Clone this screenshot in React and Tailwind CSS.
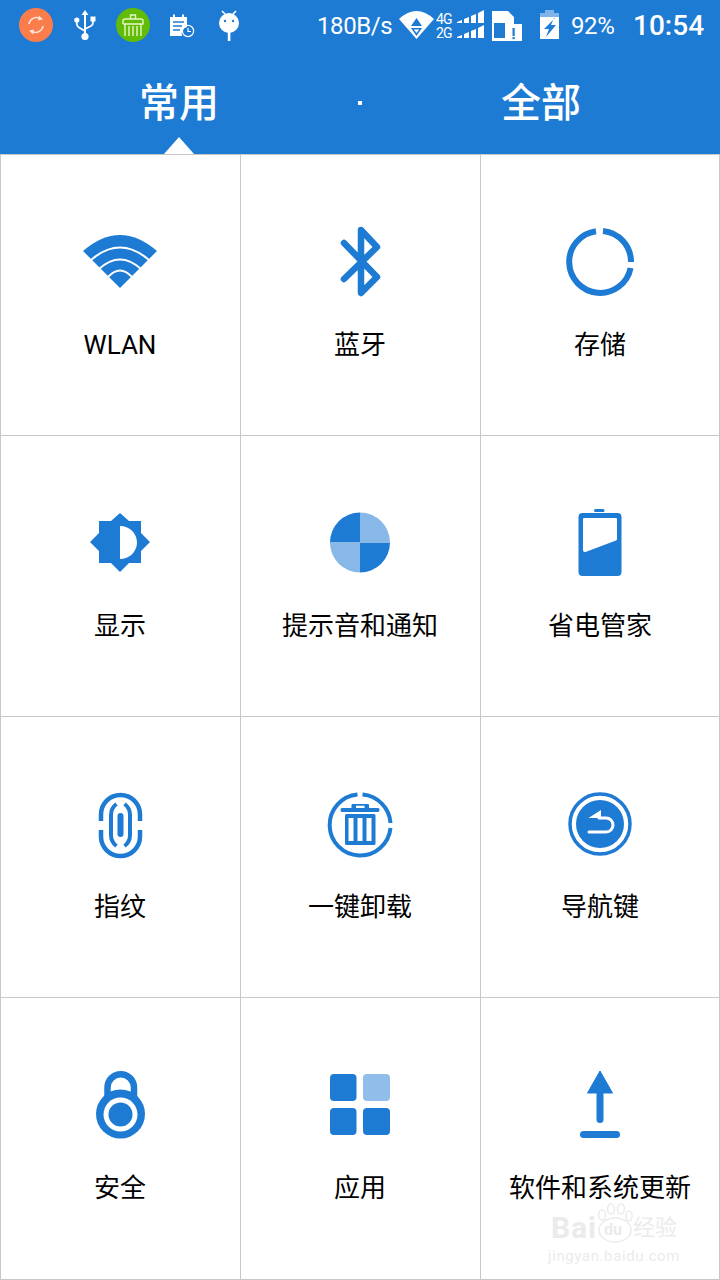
import React from 'react';

const BLUE = '#1e7bd4';
const LIGHT = '#87b8e8';

const Ico = ({ children }) => (
    <svg width="80" height="80" viewBox="0 0 80 80" fill={BLUE} className="block">
        {children}
    </svg>
);

const WifiIcon = () => (
    <Ico>
        <path d="M3 29 Q40 -3 77 29 L40 66 Z" />
        <g fill="none" stroke="#fff" strokeWidth="2">
            <path d="M11 38 Q40 13 69 38" />
            <path d="M19 47 Q40 28 61 47" />
            <path d="M28 55 Q40 42 52 55" />
        </g>
    </Ico>
);

const BluetoothIcon = () => (
    <Ico>
        <path d="M24 21 L57 55 L41 71 V8 L57 25 L24 57" fill="none" stroke={BLUE} strokeWidth="6.5" strokeLinecap="round" strokeLinejoin="round" />
    </Ico>
);

const StorageIcon = () => (
    <Ico>
        <g fill="none" stroke={BLUE} strokeWidth="6">
            <path d="M43 9 A31 31 0 0 1 71 40" />
            <path d="M70.6 46 A31 31 0 1 1 36 9.2" />
        </g>
    </Ico>
);

const BrightnessIcon = () => (
    <Ico>
        <polygon points="40,10 49,18 61,18 61,30 70,39 61,48 61,60 49,60 40,69 31,60 19,60 19,48 10,39 19,30 19,18 31,18" />
        <path d="M40 23 A17 16.5 0 0 1 40 56 Z" fill="#fff" />
    </Ico>
);

const SoundIcon = () => (
    <Ico>
        <path d="M40 39.5 V9.5 A30 30 0 0 0 10 39.5 Z" />
        <path d="M40 39.5 V69.5 A30 30 0 0 0 70 39.5 Z" />
        <path d="M40 39.5 V9.5 A30 30 0 0 1 70 39.5 Z" fill={LIGHT} />
        <path d="M40 39.5 V69.5 A30 30 0 0 1 10 39.5 Z" fill={LIGHT} />
    </Ico>
);

const BatteryIcon = () => (
    <Ico>
        <rect x="34" y="6" width="10.5" height="3" rx="1.5" />
        <rect x="18.5" y="10" width="43" height="63" rx="4" />
        <path d="M24 15 H56 Q57 15 57 16 V36 Q57 37 56 37.5 L25.5 49 Q23 49.5 23 47 V16 Q23 15 24 15 Z" fill="#fff" />
    </Ico>
);

const FingerprintIcon = () => (
    <Ico>
        <g fill="none" stroke={BLUE} strokeWidth="4.5">
            <path d="M21 37 V30.5 A19.5 19.5 0 0 1 60 30.5 V37" />
            <path d="M21 46 V52.5 A19.5 19.5 0 0 0 60 52.5 V46" />
            <path d="M36.5 20 Q31 24 31 31 V51 Q31 58 36.5 62" strokeWidth="4" />
            <path d="M44.5 20 Q50 24 50 31 V51 Q50 58 44.5 62" strokeWidth="4" />
        </g>
        <rect x="37.5" y="29" width="6" height="24" rx="3" />
    </Ico>
);

const UninstallIcon = () => (
    <Ico>
        <g fill="none" stroke={BLUE} strokeWidth="4">
            <path d="M42.5 10.5 A30.5 30.5 0 0 1 70.5 39" />
            <path d="M70.5 44 A30.5 30.5 0 1 1 37.5 10.6" />
        </g>
        <path d="M31.5 24 V21 Q31.5 20 32.5 20 H48 Q49 20 49 21 V24 H58 Q59.5 24 59.5 26 Q59.5 28 58 28 H22 Q20.5 28 20.5 26 Q20.5 24 22 24 Z" />
        <rect x="36" y="21.7" width="8.5" height="2.3" fill="#fff" />
        <rect x="25" y="30" width="30.5" height="31" rx="1.5" />
        <rect x="28.5" y="34" width="5" height="23" fill="#fff" />
        <rect x="37.5" y="34" width="5" height="23" fill="#fff" />
        <rect x="46.5" y="34" width="5" height="23" fill="#fff" />
    </Ico>
);

const NavIcon = () => (
    <Ico>
        <circle cx="40" cy="40" r="30" fill="none" stroke={BLUE} strokeWidth="3.5" />
        <circle cx="40" cy="40" r="24" />
        <path d="M28.5 34 L41 26 V34 Z" fill="#fff" />
        <path d="M29 48 H46 A7 7 0 0 0 46 34 H39" fill="none" stroke="#fff" strokeWidth="3" strokeLinecap="round" />
    </Ico>
);

const LockIcon = () => (
    <Ico>
        <path d="M27.5 34 V22.5 A13.2 13.2 0 0 1 54 22.5 V34" fill="none" stroke={BLUE} strokeWidth="6.5" />
        <circle cx="40.5" cy="49" r="24.5" />
        <circle cx="40.5" cy="49.5" r="17" fill="#fff" />
        <circle cx="40.5" cy="49.5" r="12" />
    </Ico>
);

const AppsIcon = () => (
    <Ico>
        <rect x="10" y="9" width="26.5" height="27" rx="4" />
        <rect x="43" y="9" width="27" height="27" rx="4" fill="#90bde9" />
        <rect x="10" y="43" width="26.5" height="27" rx="4" />
        <rect x="43" y="43" width="27" height="27" rx="4" />
    </Ico>
);

const UpdateIcon = () => (
    <Ico>
        <path d="M40 6 L52.5 28 H27.5 Z" stroke={BLUE} strokeLinejoin="round" />
        <rect x="36.5" y="26" width="7" height="32" rx="3.5" />
        <rect x="20" y="66" width="40" height="7" rx="3.5" />
    </Ico>
);

const items = [
    { label: 'WLAN', Icon: WifiIcon },
    { label: '蓝牙', Icon: BluetoothIcon },
    { label: '存储', Icon: StorageIcon },
    { label: '显示', Icon: BrightnessIcon },
    { label: '提示音和通知', Icon: SoundIcon },
    { label: '省电管家', Icon: BatteryIcon },
    { label: '指纹', Icon: FingerprintIcon },
    { label: '一键卸载', Icon: UninstallIcon },
    { label: '导航键', Icon: NavIcon },
    { label: '安全', Icon: LockIcon },
    { label: '应用', Icon: AppsIcon },
    { label: '软件和系统更新', Icon: UpdateIcon },
];

const StatusBar = () => (
    <div className="flex h-[50px] items-center text-white">
        <svg width="34" height="50" viewBox="0 0 34 50" className="ml-[19px] shrink-0">
            <circle cx="17" cy="25" r="17" fill="#fb7d4b" />
            <g fill="none" stroke="#ffe3d6" strokeWidth="1.6">
                <path d="M10 24 A7.5 7.5 0 0 1 21 18.5" />
                <path d="M24 26 A7.5 7.5 0 0 1 13 31.5" />
            </g>
            <path d="M20 15.5 L24 19.5 L19 20.5 Z M14 34.5 L10 30.5 L15 29.5 Z" fill="#ffe3d6" />
        </svg>
        <svg width="22" height="50" viewBox="0 0 22 50" className="ml-[21px] shrink-0" fill="#fff">
            <path d="M11 10 L14.5 15 H12 V34 H10 V15 H7.5 Z" />
            <circle cx="11" cy="36.5" r="3.6" />
            <circle cx="2.8" cy="20" r="2.6" />
            <rect x="16.5" y="16.5" width="5" height="5" />
            <path d="M2.8 21 V24 Q2.8 26 5 27.5 L11 31 M19 21 V22.5 Q19 25 17 26 L11 29" fill="none" stroke="#fff" strokeWidth="1.8" />
        </svg>
        <svg width="34" height="50" viewBox="0 0 34 50" className="ml-[20px] shrink-0">
            <circle cx="17" cy="25" r="17" fill="#62bb06" />
            <path d="M14.5 19 V15 H19.5 V19 M7 24 V21 Q7 19 9 19 H25 Q27 19 27 21 V24 H7 M9 24 V36 M13 26 V36 M17 26 V36 M21 26 V36 M25 24 V36" fill="none" stroke="#e7f7c8" strokeWidth="1.4" />
        </svg>
        <svg width="26" height="50" viewBox="0 0 26 50" className="ml-[19px] shrink-0" fill="#fff">
            <path d="M1 17 H4 V14.5 H6 V17 H13 V14.5 H15 V17 H18 V27 A7 7 0 0 0 13 36 H1 Z" />
            <g stroke="#1e7bd4" strokeWidth="1.5">
                <path d="M4 22 H15 M4 26 H13 M4 30 H11" />
            </g>
            <circle cx="19" cy="31" r="5.6" fill="none" stroke="#fff" strokeWidth="1.2" />
            <path d="M19 28 V31.5 H22" fill="none" stroke="#fff" strokeWidth="1.2" />
        </svg>
        <svg width="22" height="50" viewBox="0 0 22 50" className="ml-[23px] shrink-0" fill="#fff">
            <path d="M4 11 L7 14 M18 11 L15 14" stroke="#fff" strokeWidth="1.6" />
            <circle cx="11" cy="23" r="10" />
            <rect x="9.8" y="32" width="2.6" height="9" />
            <circle cx="7" cy="21" r="1.2" fill="#1e7bd4" />
            <circle cx="15" cy="21" r="1.2" fill="#1e7bd4" />
        </svg>
        <span className="ml-[77px] mt-[2px] w-[82px] shrink-0 text-[24px] leading-none tracking-[-0.4px]">180B/s</span>
        <svg width="35" height="50" viewBox="0 0 35 50" className="shrink-0" fill="#fff">
            <path d="M0 19 Q17.5 3 35 19 L17.5 39 Z" />
            <path d="M17.5 18 L23 26 H12 Z" fill="#1e7bd4" />
            <path d="M12 28 H23 L17.5 36 Z" fill="#1e7bd4" />
            <path d="M14.8 29.5 H20.2 L17.5 33 Z" fill="#fff" />
        </svg>
        <div className="ml-[2px] mt-[1px] flex w-[18px] shrink-0 flex-col text-[14px] leading-[14px] tracking-[-0.8px]">
            <span>4G</span>
            <span>2G</span>
        </div>
        <svg width="28" height="50" viewBox="0 0 28 50" className="ml-[3px] shrink-0" fill="#fff">
            <path d="M0 23 V22 L5 20 V23 Z M7 23 V19 L12 17 V23 Z M14 23 V16 L19 14 V23 Z M21 23 V13 L27 10 V23 Z" />
            <path d="M0 38 V37 L5 35 V38 Z M7 38 V34 L12 32 V38 Z M14 38 V31 L19 29 V38 Z M21 38 V28 L27 25 V38 Z" />
        </svg>
        <svg width="30" height="50" viewBox="0 0 30 50" className="ml-[7px] shrink-0" fill="#fff">
            <path d="M0 11 H16 L22 17 V24 H13 V41 H0 Z" />
            <rect x="2" y="23" width="11" height="15" fill="#1e7bd4" />
            <rect x="13" y="24" width="17" height="17" />
            <rect x="20.5" y="28" width="2.2" height="8" fill="#1e7bd4" />
            <rect x="20.5" y="37" width="2.2" height="2.2" fill="#1e7bd4" />
        </svg>
        <svg width="19" height="50" viewBox="0 0 19 50" className="ml-[18px] shrink-0" fill="#fff">
            <rect x="0" y="16" width="19" height="23" />
            <path d="M5 10 H14 V13 H19 V17 H0 V13 H5 Z" fill="#7fb4e8" />
            <path d="M15 18 L4 29 H9 L6 37 L16 25 H11 L14 18 Z" fill="#1e7bd4" />
        </svg>
        <span className="ml-[12px] mt-[2px] w-[47px] shrink-0 text-[24px] leading-none tracking-[-0.4px]">92%</span>
        <span className="ml-[15px] mt-[2px] shrink-0 text-[28px] font-medium leading-none">10:54</span>
    </div>
);

const Watermark = () => (
    <div className="absolute bottom-[16px] right-[40px] flex flex-col items-center text-[#ebebeb]">
        <div className="flex items-end">
            <span className="text-[30px] font-bold leading-[30px] tracking-[1px]">Bai</span>
            <div className="relative h-[40px] w-[36px]">
                <svg width="36" height="40" viewBox="0 0 36 40" fill="none" stroke="#ebebeb" strokeWidth="1.5">
                    <ellipse cx="18" cy="27" rx="16" ry="12" />
                    <ellipse cx="5" cy="12" rx="3.5" ry="5" />
                    <ellipse cx="14" cy="6" rx="3.5" ry="5" />
                    <ellipse cx="24" cy="6" rx="3.5" ry="5" />
                    <ellipse cx="32" cy="13" rx="3" ry="5" />
                </svg>
                <span className="absolute bottom-[3px] left-[7px] text-[16px] font-bold leading-[20px]">du</span>
            </div>
            <span className="text-[22px] leading-[30px]">经验</span>
        </div>
        <span className="mt-[5px] text-[15px] leading-[16px] tracking-[0.6px]">jingyan.baidu.com</span>
    </div>
);

export default function App() {
    return (
        <div className="relative h-[1280px] w-[720px] overflow-hidden bg-white font-['Roboto','Noto_Sans_CJK_SC',sans-serif]">
            <div className="h-[154px] bg-[#1e7bd4]">
                <StatusBar />
                <div className="flex h-[104px] text-white">
                    <div className="relative flex flex-1 justify-center pt-[25px]">
                        <span className="text-[40px] font-medium leading-[58px]">常用</span>
                        <div className="absolute bottom-0 left-[164px] h-0 w-0 border-x-[15px] border-b-[17px] border-x-transparent border-b-white" />
                    </div>
                    <div className="flex w-[4px] justify-center pt-[51px]">
                        <div className="h-[4px] w-[4px] bg-white" />
                    </div>
                    <div className="flex flex-1 justify-center pt-[25px]">
                        <span className="text-[40px] font-medium leading-[58px]">全部</span>
                    </div>
                </div>
            </div>
            <div className="grid grid-cols-[241px_240px_239px] grid-rows-[281px_281px_281px_282px] border-t border-[#c8c8c8]">
                {items.map(({ label, Icon }, i) => (
                    <div
                        key={label}
                        className={`flex flex-col items-center border-b border-[#c8c8c8] pt-[67px] ${i % 3 === 0 ? 'border-x pr-px' : i % 3 === 1 ? 'border-r pr-px' : 'border-r'}`}
                    >
                        <Icon />
                        <span className="mt-[23px] whitespace-nowrap text-[26px] leading-[40px] text-black">{label}</span>
                    </div>
                ))}
            </div>
            <Watermark />
        </div>
    );
}
